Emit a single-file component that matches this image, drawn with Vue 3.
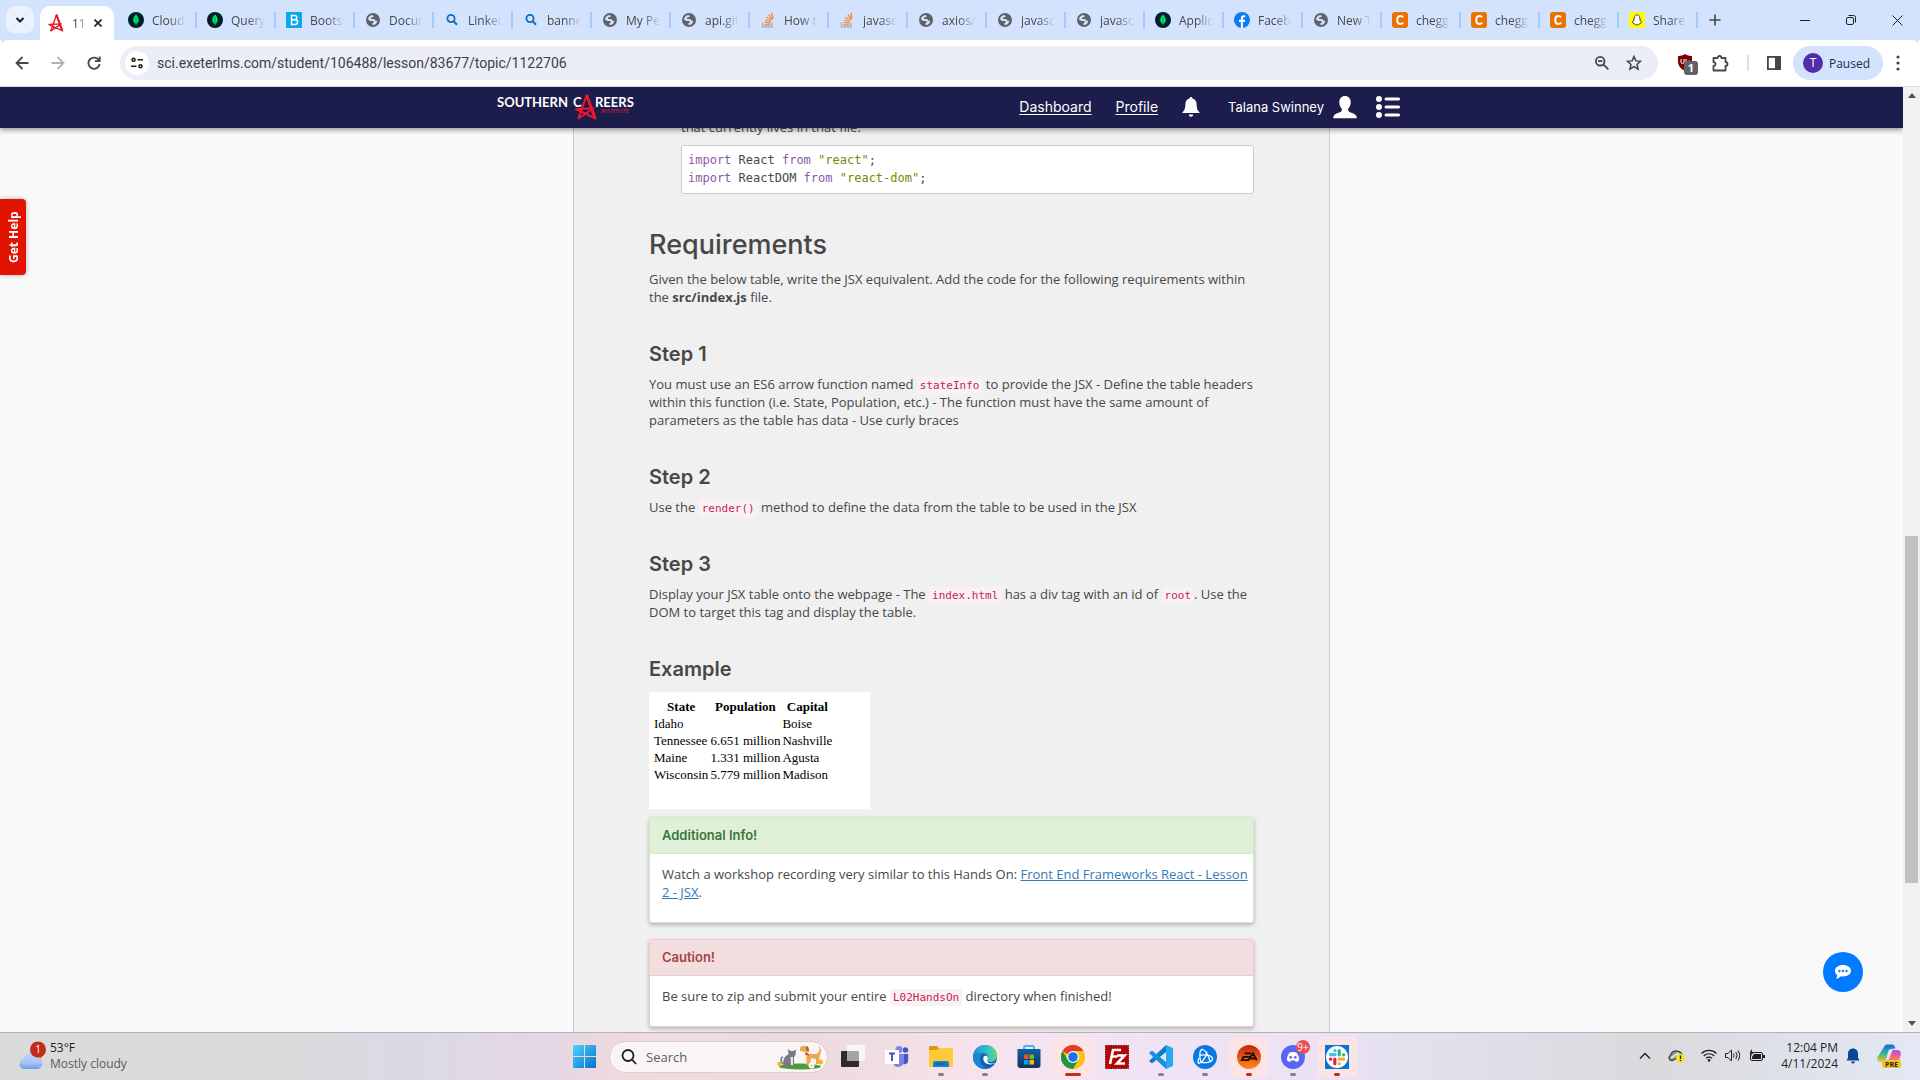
<script setup>
import { ref } from "vue";

const url = ref("sci.exeterlms.com/student/106488/lesson/83677/topic/1122706");
const search = ref("");

const tabs = [
  { icon: "mongo", title: "Cloud: Mongo" },
  { icon: "mongo", title: "Query Docs" },
  { icon: "bootswatch", title: "Bootswatch" },
  { icon: "globe", title: "Document" },
  { icon: "lens", title: "LinkedIn" },
  { icon: "lens", title: "banner" },
  { icon: "globe", title: "My Personal" },
  { icon: "globe", title: "api.github" },
  { icon: "stack", title: "How to" },
  { icon: "stack", title: "javascript" },
  { icon: "globe", title: "axios/axios" },
  { icon: "globe", title: "javascript" },
  { icon: "globe", title: "javascript" },
  { icon: "mongo", title: "Application" },
  { icon: "facebook", title: "Facebook" },
  { icon: "globe", title: "New Tab" },
  { icon: "chegg", title: "chegg.com" },
  { icon: "chegg", title: "chegg.com" },
  { icon: "chegg", title: "chegg.com" },
  { icon: "snap", title: "Share" },
];

const apps = [
  { icon: "taskview", label: "Task view" },
  { icon: "teams", label: "Teams" },
  { icon: "folder", label: "File Explorer", open: true },
  { icon: "edge", label: "Edge", open: true },
  { icon: "store", label: "Store" },
  { icon: "chrome", label: "Chrome", open: true, alert: true, current: true },
  { icon: "filezilla", label: "FileZilla" },
  { icon: "vscode", label: "Visual Studio Code", open: true },
  { icon: "battlenet", label: "Battle.net", open: true },
  { icon: "ea", label: "EA", open: true, alert: true },
  { icon: "discord", label: "Discord", open: true, badge: "9+" },
  { icon: "slack", label: "Slack", open: true, alert: true },
];

const states = [
  { name: "Idaho", population: "", capital: "Boise" },
  { name: "Tennessee", population: "6.651 million", capital: "Nashville" },
  { name: "Maine", population: "1.331 million", capital: "Agusta" },
  { name: "Wisconsin", population: "5.779 million", capital: "Madison" },
];
</script>

<template>
  <svg class="sprite" aria-hidden="true">
    <defs>
      <linearGradient id="winBlue" x1="0" y1="0" x2="1" y2="1">
        <stop offset="0" stop-color="#4fd5fb" />
        <stop offset="1" stop-color="#0470cf" />
      </linearGradient>
      <linearGradient id="edgeTop" x1="0" y1="0" x2="1" y2="0">
        <stop offset="0" stop-color="#1b8fd6" />
        <stop offset="0.6" stop-color="#35c1c8" />
        <stop offset="1" stop-color="#62d96b" />
      </linearGradient>
      <linearGradient id="eaFire" x1="0" y1="0" x2="0" y2="1">
        <stop offset="0" stop-color="#c62410" />
        <stop offset="1" stop-color="#ff8a1c" />
      </linearGradient>
      <linearGradient id="cloudFill" x1="0" y1="0" x2="0" y2="1">
        <stop offset="0" stop-color="#b9d6fb" />
        <stop offset="0.6" stop-color="#a9c4f5" />
        <stop offset="1" stop-color="#6f9bea" />
      </linearGradient>
      <linearGradient id="copilotLeft" x1="0" y1="0" x2="0" y2="1">
        <stop offset="0" stop-color="#1d63e0" />
        <stop offset="0.5" stop-color="#2fb6a0" />
        <stop offset="1" stop-color="#f5c51e" />
      </linearGradient>
      <linearGradient id="copilotRight" x1="0" y1="0" x2="0" y2="1">
        <stop offset="0" stop-color="#a157e8" />
        <stop offset="0.5" stop-color="#ef5aa0" />
        <stop offset="1" stop-color="#ff8a3c" />
      </linearGradient>
      <linearGradient id="storeFill" x1="0" y1="0" x2="0" y2="1">
        <stop offset="0" stop-color="#0f5fa8" />
        <stop offset="1" stop-color="#15315c" />
      </linearGradient>
    </defs>
    <symbol id="mongo" viewBox="0 0 16 16">
      <circle cx="8" cy="8" r="8" fill="#001e2b" />
      <path d="M8 2.500c1.600 1.700 2.700 3.400 2.700 5.400S9.400 11.300 8.300 12v1.500h-.6V12C6.600 11.300 5.300 9.900 5.300 7.900S6.400 4.200 8 2.500z" fill="#00ed64" />
      <path d="M8 5v8" stroke="#00684a" stroke-width="0.6" />
    </symbol>
    <symbol id="bootswatch" viewBox="0 0 16 16">
      <rect width="16" height="16" rx="1" fill="#0aa9e8" />
      <path d="M5.500 3.500h3.200a2 2 0 0 1 0 4.200H5.500zM5.500 7.700h3.700a2.400 2.400 0 0 1 0 4.800H5.500z" fill="none" stroke="#fff" stroke-width="1.400" />
    </symbol>
    <symbol id="globe" viewBox="0 0 16 16">
      <circle cx="8" cy="8" r="7" fill="#5f6368" />
      <path d="M3 7.500C3 5 5 3 7.500 2.900L9 4.200 7.600 5.300 6 5.600v1.500h3.200l1.400 1.600h1.600C12 11 10.500 12.900 8 13l-1-1.200 2-1.500-.8-1.400H5.500z" fill="#d3e3fd" />
    </symbol>
    <symbol id="lens" viewBox="0 0 16 16">
      <circle cx="7" cy="6.500" r="3.600" fill="none" stroke="#0f6cbd" stroke-width="1.800" />
      <path d="M9.700 9.200l3.300 3.500" stroke="#0f6cbd" stroke-width="2" />
    </symbol>
    <symbol id="stack" viewBox="0 0 16 16">
      <path d="M2.500 10.500v4.300h9.600v-4.300" fill="none" stroke="#a9adb2" stroke-width="1.300" />
      <path d="M4.300 12.800h6M4.400 10.500l5.900.6M5 8l5.700 1.700M6.400 5.300l5.100 3M8.800 2.600l3.600 4.700M11.800 1l1.200 5.500" stroke="#f48024" stroke-width="1.200" />
    </symbol>
    <symbol id="facebook" viewBox="0 0 16 16">
      <circle cx="8" cy="8" r="8" fill="#0a7cf5" />
      <path d="M6.900 16V9.900H5V7.700h1.900V6.300c0-2 1-3 2.900-3h1.500v2H10c-.8 0-1.100.4-1.100 1.100v1.300h2.300l-.4 2.200H8.900V16z" fill="#fff" />
    </symbol>
    <symbol id="chegg" viewBox="0 0 16 16">
      <rect width="16" height="16" rx="3" fill="#eb7100" />
      <path d="M11 5.300C10.400 4.300 9.500 4 8.600 4 6.500 4 5.200 5.600 5.200 8s1.300 4 3.400 4c1 0 1.900-.4 2.500-1.400" fill="none" stroke="#fff" stroke-width="2" />
    </symbol>
    <symbol id="snap" viewBox="0 0 16 16">
      <rect width="16" height="16" rx="3" fill="#fffc00" />
      <path d="M8 2.800c1.700 0 2.700 1.200 2.700 2.800v1.300l1 .1-.8.900c.3 1.100 1 1.900 2 2.200-.2.600-1 .7-1.300.9l-.3.800c-1.300-.1-1.800 1.200-3.300 1.200s-2-1.300-3.300-1.200l-.3-.8c-.3-.2-1.100-.3-1.300-.9 1-.3 1.700-1.100 2-2.200l-.8-.9 1-.1V5.600C5.300 4 6.300 2.800 8 2.800z" fill="#fff" stroke="#222" stroke-width="0.800" />
    </symbol>
    <symbol id="star" viewBox="0 0 22 26">
      <path d="M3.200 24.800L11.600 1.500 20.600 24.500 1 15.200 18.500 14.200 3.200 24.800" fill="none" stroke="#e8192c" stroke-width="2" stroke-linejoin="round" />
      <path d="M11.600 1l8 22" stroke="#e8192c" stroke-width="3" />
    </symbol>

    <symbol id="taskview" viewBox="0 0 24 24">
      <rect x="6" y="0" width="18" height="16" rx="1" fill="#f6f6f6" />
      <rect x="0" y="6" width="18" height="16" rx="1" fill="#2c2c2c" />
      <path d="M6 6h12v10H6z" fill="#a3a3a3" />
    </symbol>
    <symbol id="teams" viewBox="0 0 24 24">
      <circle cx="20.500" cy="5" r="2.700" fill="#4b53bc" />
      <circle cx="14" cy="4.500" r="3.500" fill="#7b83eb" />
      <path d="M17 9h6.200v7a3.500 3.500 0 0 1-6.200 2z" fill="#4b53bc" />
      <path d="M9 9h10v7.500a6 6 0 0 1-10 4z" fill="#7b83eb" />
      <rect y="5" width="14" height="14" fill="#fff" />
      <path d="M4 8.500h6M7 8.500v7.500" stroke="#4b53bc" stroke-width="2" />
    </symbol>
    <symbol id="folder" viewBox="0 0 24 24">
      <path d="M0 2a1 1 0 0 1 1-1h7l3 3v4H0z" fill="#d99a0b" />
      <path d="M0 5h8l2-2h13a1 1 0 0 1 1 1v18H0z" fill="#ffc937" />
      <path d="M4 22v-4a2 2 0 0 1 2-2h12a2 2 0 0 1 2 2v4z" fill="#1280d0" />
      <path d="M8 19h8" stroke="#0a5a9c" stroke-width="1.500" />
    </symbol>
    <symbol id="edge" viewBox="0 0 24 24">
      <circle cx="12" cy="12" r="12" fill="#0f5fb8" />
      <path d="M0 11C1 4.500 6 0 12 0c7 0 12 5 12 10.500 0 4-3 6.500-6.500 6.500-2.500 0-4-1-3-2.500C16 12 14 8 9.500 8 5 8 1.500 9 0 11z" fill="url(#edgeTop)" />
      <path d="M9 10c-3 2.500-2.500 9 3.500 12.500-6 1.500-12-3-12.500-9.500C1 8.500 6 7 9.500 8z" fill="#1b86d8" />
      <path d="M11 11c-2 3 0 8 6 8.500 2.500 0 4.500-.8 5.200-1.500-.7.200-2 .6-4 .4-3 0-4.500-2.400-3.700-4 1-1.800 0-4.500-3.500-3.400z" fill="#fff" />
    </symbol>
    <symbol id="store" viewBox="0 0 24 24">
      <path d="M7 5V2.500A1.500 1.500 0 0 1 8.500 1h7A1.500 1.500 0 0 1 17 2.500V5" fill="none" stroke="#38c0f2" stroke-width="2" />
      <path d="M0.500 4h23v16a3 3 0 0 1-3 3h-17a3 3 0 0 1-3-3z" fill="url(#storeFill)" />
      <path d="M7 9.500h4.500V14H7z" fill="#f25022" />
      <path d="M12.500 9.500H17V14h-4.500z" fill="#7fba00" />
      <path d="M7 15h4.500v4.500H7z" fill="#00a4ef" />
      <path d="M12.500 15H17v4.500h-4.500z" fill="#ffb900" />
    </symbol>
    <symbol id="chrome" viewBox="0 0 24 24">
      <circle cx="12" cy="12" r="12" fill="#fbc116" />
      <path d="M12 12L1.600 6A12 12 0 0 1 22.400 6H12z" fill="#e33b2e" />
      <path d="M1.600 6A12 12 0 0 0 12 24l5.200-9L12 12 6.800 15z" fill="#229342" />
      <circle cx="12" cy="12" r="6" fill="#fff" />
      <circle cx="12" cy="12" r="4.800" fill="#1a73e8" />
    </symbol>
    <symbol id="filezilla" viewBox="0 0 24 24">
      <rect x="0.500" y="0.500" width="23" height="23" fill="#b00606" stroke="#7c0000" stroke-dasharray="1.500 1" />
      <path d="M5 19l3-14h8M6.500 11.500h6M12 10.500h7.500L12 18.500h8" fill="none" stroke="#fff" stroke-width="2.600" />
    </symbol>
    <symbol id="vscode" viewBox="0 0 24 24">
      <path d="M17 0l7 3v18l-7 3z" fill="#24a9f2" />
      <path d="M17 0v7L3 18.500 0 16z" fill="#0d7fc9" />
      <path d="M17 24v-7L3 5.500 0 8z" fill="#1592df" />
    </symbol>
    <symbol id="battlenet" viewBox="0 0 24 24">
      <circle cx="12" cy="12" r="12" fill="#0a78e6" />
      <g fill="none" stroke="#fff" stroke-width="1.300">
        <path d="M8 17.500C6 12 6.500 4 9.500 4.500c3.500 1 6.500 7 7.500 12" />
        <path d="M6.500 10.500c4-1.500 13-.5 13 3.500 0 3-6 4-11 3.500" />
        <path d="M13.500 6.500c1 3-3.500 10.500-7.500 12C4.500 18 5 15 6.200 13" />
      </g>
    </symbol>
    <symbol id="ea" viewBox="0 0 24 24">
      <circle cx="12" cy="12" r="12" fill="url(#eaFire)" />
      <path d="M7.500 8.300H14M6 11.800h6.500M6.800 11.500L4.800 15.200h6.500L16 8.300l3.800 7M13.500 13.500h5" fill="none" stroke="#1a0d08" stroke-width="1.800" />
    </symbol>
    <symbol id="discord" viewBox="0 0 24 24">
      <circle cx="12" cy="12" r="12" fill="#5865f2" />
      <path d="M8.500 7.500c2-.7 5-.7 7 0 1.800 2.500 2.700 5 2.500 8-1 .9-2 1.300-3 1.500l-1-1.500h-4L9 17c-1-.2-2-.6-3-1.500-.2-3 .7-5.500 2.500-8z" fill="#fff" />
      <circle cx="9.700" cy="12.300" r="1.400" fill="#5865f2" />
      <circle cx="14.300" cy="12.300" r="1.400" fill="#5865f2" />
    </symbol>
    <symbol id="slack" viewBox="0 0 24 24">
      <rect width="24" height="24" fill="#0a73d1" />
      <circle cx="12" cy="12" r="11" fill="#fff" />
      <g fill="none" stroke-width="3.200" stroke-linecap="round">
        <path d="M10 5.500v.2M5.500 9.700H10" stroke="#36c5f0" />
        <path d="M14.200 5.500v4.300M18.500 9.800h.2" stroke="#2eb67d" />
        <path d="M14.200 14.200h4.500M14.200 18.500v.2" stroke="#ecb22e" />
        <path d="M9.800 14.200v4.500M5.500 14.200h.2" stroke="#e01e5a" />
      </g>
    </symbol>
  </svg>

  <div class="window">
    <header class="tabstrip">
      <button class="tab-search" aria-label="Search tabs">
        <svg width="10" height="10" viewBox="0 0 10 10"><path d="M1.500 3l3.500 3.500L8.500 3" fill="none" stroke="#1f1f1f" stroke-width="2" /></svg>
      </button>
      <div class="tab active">
        <svg width="16" height="18"><use href="#star" /></svg>
        <span class="tab-title">11</span>
        <button aria-label="Close tab">
          <svg width="8" height="8" viewBox="0 0 8 8"><path d="M0.500 0.500l7 7M7.500 0.500l-7 7" stroke="#1f1f1f" stroke-width="1.600" /></svg>
        </button>
      </div>
      <div v-for="(tab, i) in tabs" :key="i" class="tab">
        <svg width="16" height="16"><use :href="'#' + tab.icon" /></svg>
        <span class="tab-title">{{ tab.title }}</span>
      </div>
      <button class="new-tab" aria-label="New tab">
        <svg width="12" height="12" viewBox="0 0 12 12"><path d="M6 0.500v11M0.500 6h11" stroke="#444746" stroke-width="1.600" /></svg>
      </button>
      <div class="window-buttons">
        <button aria-label="Minimize">
          <svg width="10" height="10" viewBox="0 0 10 10"><path d="M0 5.500h10" stroke="#1f1f1f" /></svg>
        </button>
        <button aria-label="Restore">
          <svg width="10" height="10" viewBox="0 0 10 10" fill="none" stroke="#1f1f1f"><rect x="0.500" y="2.500" width="7" height="7" rx="1.500" /><path d="M2.500 0.500h5a2 2 0 0 1 2 2v5" /></svg>
        </button>
        <button aria-label="Close">
          <svg width="11" height="11" viewBox="0 0 11 11"><path d="M0.500 0.500l10 10M10.500 0.500l-10 10" stroke="#1f1f1f" /></svg>
        </button>
      </div>
    </header>

    <div class="toolbar">
      <button class="tool" aria-label="Back">
        <svg width="14" height="14" viewBox="0 0 14 14"><path d="M7.500 1L1.500 7l6 6M1.500 7H13.500" fill="none" stroke="#444746" stroke-width="1.800" /></svg>
      </button>
      <button class="tool" aria-label="Forward">
        <svg width="14" height="14" viewBox="0 0 14 14"><path d="M6.500 1l6 6-6 6M12.500 7H0.500" fill="none" stroke="#b0b2b3" stroke-width="1.800" /></svg>
      </button>
      <button class="tool" aria-label="Reload">
        <svg width="14" height="14" viewBox="0 0 14 14"><path d="M12 4.500A5.600 5.600 0 1 0 12.600 8M12.700 0.500v4.700H8" fill="none" stroke="#444746" stroke-width="1.800" /></svg>
      </button>
      <div class="omnibox">
        <span class="site-info">
          <svg width="12" height="12" viewBox="0 0 12 12" fill="none" stroke="#1f1f1f" stroke-width="1.600"><circle cx="2.500" cy="2.800" r="1.500" /><path d="M6.500 2.800H12M0 9.200h5.500" /><circle cx="9.500" cy="9.200" r="1.500" /></svg>
        </span>
        <input v-model="url" class="url" type="text" aria-label="Address" spellcheck="false" />
        <svg width="16" height="16" viewBox="0 0 16 16" fill="none" stroke="#444746" stroke-width="1.800"><circle cx="6.200" cy="6.200" r="4.300" /><path d="M9.300 9.300l5 5M4 6.200h4.400" /></svg>
        <svg width="16" height="16" viewBox="0 0 16 16"><path d="M8 1.500l1.900 4.400 4.700.4-3.600 3.100 1.100 4.700L8 11.600l-4.100 2.500L5 9.400 1.400 6.300l4.700-.4z" fill="none" stroke="#444746" stroke-width="1.500" /></svg>
      </div>
      <div class="extensions">
        <span class="ublock">
          <svg width="16" height="18" viewBox="0 0 16 18"><path d="M8 0c2 1.500 5 2 7 2v5c0 5-3 8-7 10-4-2-7-5-7-10V2c2 0 5-.5 7-2z" fill="#800000" /><path d="M4 5v3a1.500 1.500 0 0 0 3 0V5M9 9V5M9 7.500a2 2 0 1 0 3-1" fill="none" stroke="#fff" /></svg>
          <b>1</b>
        </span>
        <svg width="18" height="18" viewBox="0 0 18 18"><path d="M2.500 4h4a2 2 0 0 1 4 0h4v4a2 2 0 0 1 0 4v4.500h-12v-4.500a2 2 0 0 0 0-4z" fill="none" stroke="#444746" stroke-width="1.800" stroke-linejoin="round" /></svg>
        <i class="divider"></i>
        <svg width="14" height="14" viewBox="0 0 14 14"><rect x="0.900" y="0.900" width="12.200" height="12.200" fill="none" stroke="#444746" stroke-width="1.800" /><path d="M8 1h5.500v12H8z" fill="#444746" /></svg>
      </div>
      <button class="account"><span class="avatar">T</span>Paused</button>
      <button class="kebab" aria-label="Menu">
        <svg width="4" height="16" viewBox="0 0 4 16" fill="#444746"><circle cx="2" cy="2" r="1.600" /><circle cx="2" cy="8" r="1.600" /><circle cx="2" cy="14" r="1.600" /></svg>
      </button>
    </div>

    <div class="viewport">
      <div class="page">
        <nav class="site-nav">
          <a href="#" class="logo" aria-label="Southern Careers Institute">
            <svg width="138" height="28" viewBox="0 0 138 28">
              <text x="0" y="14" class="logo-text">SOUTHERN</text>
              <text x="76" y="14" class="logo-text">C</text>
              <text x="98" y="14" class="logo-text">REERS</text>
              <text x="104" y="20" class="logo-sub">INSTITUTE</text>
              <use href="#star" x="78" y="1" width="22" height="26" />
            </svg>
          </a>
          <div class="nav-links">
            <a href="#">Dashboard</a>
            <a href="#">Profile</a>
            <svg width="18" height="20" viewBox="0 0 18 20" fill="#fff"><path d="M9 0c.9 0 1.500.6 1.500 1.500 2.700.8 4 2.700 4.100 5.500.1 4.500.8 6.300 3.400 9H0c2.600-2.700 3.300-4.500 3.400-9C3.500 4.200 4.800 2.300 7.500 1.500 7.500.6 8.100 0 9 0z" /><path d="M6.800 17.500h4.400a2.200 2.200 0 0 1-4.400 0z" /></svg>
            <span class="user">
              Talana Swinney
              <svg width="24" height="24" viewBox="0 0 24 24"><path d="M12 1c3.600 0 5.700 2.600 5.700 6.200 0 3-1 5-2.500 6.300v2.300c1.500 1.900 5.800 2.200 7.800 4.700.6.800.8 1.700.8 2.800H.2c0-1.100.2-2 .8-2.800 2-2.500 6.300-2.800 7.800-4.700v-2.300C7.300 12.200 6.300 10.200 6.300 7.200 6.300 3.600 8.400 1 12 1z" fill="#fff" /></svg>
            </span>
            <svg width="24" height="22" viewBox="0 0 24 22"><g fill="#fff"><circle cx="3" cy="3" r="3" /><circle cx="3" cy="11" r="3" /><circle cx="3" cy="19" r="3" /></g><path d="M10 3h12.500M10 11h12.500M10 19h12.500" stroke="#fff" stroke-width="3" stroke-linecap="round" /></svg>
          </div>
        </nav>

        <main class="lesson">
          <div class="list-item">
            <p>that currently lives in that file.</p>
            <pre><span class="kw">import</span> React <span class="kw">from</span> <span class="str">"react"</span>;
<span class="kw">import</span> ReactDOM <span class="kw">from</span> <span class="str">"react-dom"</span>;</pre>
          </div>
          <hr />
          <h2>Requirements</h2>
          <p>
            Given the below table, write the JSX equivalent. Add the code for the following
            requirements within the <strong>src/index.js</strong> file.
          </p>
          <hr />
          <h3>Step 1</h3>
          <p>
            You must use an ES6 arrow function named <code>stateInfo</code> to provide the JSX -
            Define the table headers within this function (i.e. State, Population, etc.) - The
            function must have the same amount of parameters as the table has data - Use curly
            braces
          </p>
          <hr />
          <h3>Step 2</h3>
          <p>
            Use the <code>render()</code> method to define the data from the table to be used in
            the JSX
          </p>
          <hr />
          <h3>Step 3</h3>
          <p>
            Display your JSX table onto the webpage - The <code>index.html</code> has a div tag
            with an id of <code>root</code>. Use the DOM to target this tag and display the table.
          </p>
          <hr />
          <h3>Example</h3>
          <div class="example">
            <table>
              <thead>
                <tr>
                  <th>State</th>
                  <th>Population</th>
                  <th>Capital</th>
                </tr>
              </thead>
              <tbody>
                <tr v-for="state in states" :key="state.name">
                  <td>{{ state.name }}</td>
                  <td>{{ state.population }}</td>
                  <td>{{ state.capital }}</td>
                </tr>
              </tbody>
            </table>
          </div>
          <section class="panel success">
            <h4>Additional Info!</h4>
            <p>
              Watch a workshop recording very similar to this Hands On:
              <a href="#">Front End Frameworks React - Lesson 2 - JSX</a>.
            </p>
          </section>
          <section class="panel danger">
            <h4>Caution!</h4>
            <p>
              Be sure to zip and submit your entire <code>L02HandsOn</code> directory when
              finished!
            </p>
          </section>
        </main>

        <button class="get-help">Get Help</button>
        <button class="chat" aria-label="Chat">
          <svg width="18" height="16" viewBox="0 0 18 16"><path d="M9 1c4.600 0 8 2.500 8 5.700S13.600 12.400 9 12.400c-.8 0-1.600-.1-2.300-.2C5.500 13.500 4 14.500 2 14.600c.8-.9 1.300-2 1.400-3.300C1.900 10.300 1 8.600 1 6.700 1 3.500 4.400 1 9 1z" fill="#fff" /><g fill="#007bff"><circle cx="5.500" cy="7" r="1.200" /><circle cx="9" cy="7" r="1.200" /><circle cx="12.500" cy="7" r="1.200" /></g></svg>
        </button>
      </div>
      <div class="scrollbar">
        <svg width="8" height="5" viewBox="0 0 8 5"><path d="M0 5l4-5 4 5z" fill="#505050" /></svg>
        <div class="track"><div class="thumb"></div></div>
        <svg width="8" height="5" viewBox="0 0 8 5"><path d="M0 0l4 5 4-5z" fill="#505050" /></svg>
      </div>
    </div>

    <footer class="taskbar">
      <div class="weather">
        <svg width="28" height="30" viewBox="0 0 28 30">
          <circle cx="19" cy="15" r="5" fill="#f58a1f" />
          <path d="M6 28a5 5 0 0 1-.5-9.900A7 7 0 0 1 18.500 16 6 6 0 0 1 19 28z" fill="url(#cloudFill)" />
          <circle cx="20" cy="8.500" r="8" fill="#c42b1c" />
          <text x="20" y="12" class="alert-count">1</text>
        </svg>
        <div class="weather-text">
          <span>53°F</span>
          <span class="muted">Mostly cloudy</span>
        </div>
      </div>
      <div class="dock">
        <button class="app" aria-label="Start">
          <svg width="23" height="23" viewBox="0 0 23 23" fill="url(#winBlue)"><path d="M0 1a1 1 0 0 1 1-1h10v11H0zM12 0h10a1 1 0 0 1 1 1v10H12zM0 12h11v11H1a1 1 0 0 1-1-1zM12 12h11v10a1 1 0 0 1-1 1H12z" /></svg>
        </button>
        <label class="search">
          <svg width="16" height="16" viewBox="0 0 16 16" fill="none" stroke="#1f1f1f" stroke-width="1.800"><circle cx="7" cy="6.500" r="5.500" /><path d="M11 10.500l4 4.500" /></svg>
          <input v-model="search" type="text" placeholder="Search" aria-label="Search" />
          <svg width="46" height="26" viewBox="0 0 46 26">
            <ellipse cx="23" cy="22.500" rx="21" ry="3" fill="#4c9a3a" />
            <path d="M6.500 21c-1-5 1-9 5-10.500L11 5l2.500 2h3L19 5.500 18.500 11 17 13v9H7z" fill="#7a7787" />
            <path d="M6.500 20c-3-1-3.500-6-.5-7" fill="none" stroke="#7a7787" stroke-width="1.500" />
            <path d="M13.500 13H16v8h-2z" fill="#e8e6ee" />
            <path d="M23 4c0-2 5-3 7-1l1 7h8c3-1 4-4 3-8 2.500 2 2.500 7 .5 10L42 20h-3v-5l-5-1-1 7h-3.500V12L28 8l-5-1z" fill="#e9a852" />
            <path d="M29 2c3 0 3.500 4 2.500 6L29 6z" fill="#a8682a" />
            <path d="M28 9l4 1v1.500l-4-1z" fill="#d33a2c" />
            <circle cx="34.500" cy="21.500" r="3" fill="#fff" /><circle cx="34.500" cy="21.500" r="1" fill="#f1b51c" />
            <circle cx="2.500" cy="20" r="2.200" fill="#f4b81c" /><circle cx="43.500" cy="18" r="2.500" fill="#f4b81c" />
          </svg>
        </label>
        <button v-for="app in apps" :key="app.icon" class="app" :class="{ alert: app.alert, open: app.open, current: app.current }" :aria-label="app.label">
          <svg width="24" height="24"><use :href="'#' + app.icon" /></svg>
          <span v-if="app.badge" class="badge">{{ app.badge }}</span>
        </button>
      </div>
      <div class="tray">
        <svg width="12" height="8" viewBox="0 0 12 8"><path d="M1 6.500l5-5 5 5" fill="none" stroke="#1f1f1f" stroke-width="1.400" /></svg>
        <svg class="onedrive" width="18" height="14" viewBox="0 0 18 14"><path d="M4 11.500C1 11.500 0 8 2.500 6.500 3 3 7 1 10 2.500c2 0 4 2 4.500 4z" fill="#9a9a9a" stroke="#3f3f3f" stroke-width="1.300" /><path d="M3 9l8-5" stroke="#e6e6e6" stroke-width="1.500" /><circle cx="12.500" cy="9.300" r="4.500" fill="#fbe122" /><path d="M12.500 6.500v3.500M12.500 11v1.200" stroke="#222" stroke-width="1.300" /></svg>
        <svg width="16" height="13" viewBox="0 0 16 13" fill="none" stroke="#1f1f1f" stroke-width="1.200"><path d="M0.500 4.500a10.500 10.500 0 0 1 15 0M2.700 7a7.400 7.400 0 0 1 10.600 0M5 9.300a4.200 4.200 0 0 1 6 0" /><circle cx="8" cy="11.300" r="0.800" fill="#1f1f1f" /></svg>
        <svg width="16" height="13" viewBox="0 0 16 13" fill="none" stroke="#1f1f1f"><path d="M0.500 4.500h2.500L6.500 1v11L3 8.500H0.500zM8.500 4.500q1.200 2 0 4M10.800 3q2.400 3.500 0 7M13 1.500q3.400 5 0 10" /></svg>
        <svg width="16" height="13" viewBox="0 0 16 13"><rect x="1.500" y="3.500" width="12" height="8" rx="1.500" fill="none" stroke="#1f1f1f" /><path d="M5 5h7v5H3V8zM14 6h2v3h-2z" fill="#1f1f1f" /><path d="M3 0L0.500 4h2L1.500 7.500 5 3H3z" fill="#1f1f1f" /></svg>
        <div class="clock">
          <span>12:04 PM</span>
          <span>4/11/2024</span>
        </div>
        <svg width="14" height="16" viewBox="0 0 14 16" fill="#0a4694"><path d="M7 0.500c3.200 0 5 2.300 5 5.200v4l1.500 2.800H.5L2 9.700v-4C2 2.800 3.800.5 7 .5zM5 13.500h4a2 2 0 0 1-4 0z" /></svg>
        <svg class="copilot" width="24" height="24" viewBox="0 0 24 24">
          <path d="M7 3c1-2 2-2.500 4-2.500h4c2 0 3 2 3.500 4l-4 .5c-2 0-3 1-3.500 3l-2 8c-.5 1-1.500 2-3 2H4c-3 0-4.500-2-3.500-5z" fill="url(#copilotLeft)" />
          <path d="M15.500 6H20c3 0 4.500 2 3.700 5L22 17H9c2 0 3-1.500 3.500-3z" fill="url(#copilotRight)" />
          <rect x="5" y="16" width="19" height="8" rx="2" fill="#f8c31c" />
          <text x="14.500" y="23" class="pre">PRE</text>
        </svg>
      </div>
    </footer>
  </div>
</template>

<style>
body {
  margin: 0;
  overflow: hidden;
}
</style>

<style scoped>
* {
  box-sizing: border-box;
}
button {
  border: 0;
  padding: 0;
  background: none;
  font: inherit;
  color: inherit;
  display: flex;
  align-items: center;
  justify-content: center;
}
input {
  border: 0;
  padding: 0;
  background: none;
  outline: 0;
  font: inherit;
  min-width: 0;
}
svg {
  flex-shrink: 0;
}
.sprite {
  position: absolute;
  width: 0;
  height: 0;
}
.window {
  display: flex;
  flex-direction: column;
  height: 100vh;
  font-family: "Open Sans", "Noto Sans", sans-serif;
  font-size: 12px;
  color: #1f1f1f;
}

/* browser */
.tabstrip {
  display: flex;
  align-items: center;
  height: 40px;
  padding-left: 6px;
  background: #d3e3fd;
}
.tab-search {
  width: 28px;
  height: 28px;
  margin-right: 6px;
  border-radius: 10px;
  background: #ebf2fe;
}
.tab {
  display: flex;
  align-items: center;
  gap: 8px;
  width: 79px;
  height: 16px;
  padding: 0 9px 0 10px;
  border-right: 2px solid #a8c7fa;
  color: #474747;
}
.tab-title {
  flex: 1;
  overflow: hidden;
  white-space: nowrap;
  mask-image: linear-gradient(to right, #000 50%, transparent);
}
.tab.active {
  z-index: 1;
  align-self: flex-end;
  width: 74px;
  height: 34px;
  margin-right: 4px;
  padding: 0 12px 0 8px;
  border: 0;
  border-radius: 10px 10px 0 0;
  background: #fff;
}
.new-tab {
  width: 34px;
}
.window-buttons {
  display: flex;
  margin-left: auto;
}
.window-buttons button {
  width: 46px;
  height: 40px;
}
.toolbar {
  display: flex;
  align-items: center;
  height: 47px;
  padding: 0 7px 0 4px;
  border-bottom: 1px solid #dcdcdc;
  border-radius: 8px 8px 0 0;
  background: #fff;
  box-shadow: 0 -8px 0 -1px #d3e3fd;
}
.tool {
  width: 36px;
  height: 34px;
}
.omnibox {
  display: flex;
  flex: 1;
  align-items: center;
  gap: 16px;
  height: 34px;
  margin-left: 8px;
  padding: 0 16px 0 5px;
  border-radius: 17px;
  background: #ebeef7;
}
.site-info {
  display: flex;
  align-items: center;
  justify-content: center;
  width: 24px;
  height: 24px;
  margin-right: -8px;
  border-radius: 50%;
  background: #fff;
}
.url {
  flex: 1;
  font-family: Roboto, sans-serif;
  font-size: 14px;
  color: #3c4043;
}
.extensions {
  display: flex;
  align-items: center;
  gap: 18px;
  padding: 0 12px 0 19px;
}
.ublock {
  position: relative;
  display: flex;
}
.ublock b {
  position: absolute;
  left: 7px;
  top: 7px;
  width: 14px;
  border-radius: 3px;
  background: #5f6368;
  color: #fff;
  font-size: 11px;
  line-height: 14px;
  text-align: center;
}
.divider {
  width: 2px;
  height: 16px;
  background: #d3e3fd;
}
.account {
  gap: 6px;
  height: 34px;
  padding: 0 13px 0 10px;
  border-radius: 17px;
  background: #d3e3fd;
  color: #1d2b50;
}
.avatar {
  width: 20px;
  border-radius: 50%;
  background: #512da8;
  color: #fff;
  line-height: 20px;
}
.kebab {
  width: 30px;
}

/* page */
.viewport {
  display: flex;
  flex: 1;
  min-height: 0;
}
.page {
  position: relative;
  flex: 1;
  overflow: hidden;
  background: #f9f9f9;
}
.site-nav {
  position: relative;
  z-index: 1;
  display: flex;
  align-items: center;
  justify-content: space-between;
  height: 41px;
  padding: 0 503px 2px 497px;
  background: #1c1d4c;
  box-shadow: 0 2px 5px rgba(0, 0, 0, 0.4);
  color: #fff;
  font: 13px/18px Inter, sans-serif;
}
.logo {
  display: flex;
}
.logo-text {
  fill: #fff;
  font: 700 13px Lato, sans-serif;
}
.logo-sub {
  fill: #e8192c;
  font: italic 6px Lato, sans-serif;
}
.nav-links {
  display: flex;
  align-items: center;
  gap: 24px;
}
.nav-links a {
  color: #fff;
  font-size: 14px;
  text-underline-offset: 2px;
}
.user {
  display: flex;
  align-items: center;
  gap: 9px;
  margin: 0 -5px 0 4px;
}
.lesson {
  width: 757px;
  max-width: 100%;
  min-height: 100%;
  margin: -20px auto 0;
  padding: 9px 75px 0;
  border: 1px solid #ccc;
  background: #f0f0f0;
  color: #474747;
  font-size: 13px;
  line-height: 18px;
}
.lesson p {
  margin: 0 0 16px;
}
.lesson .list-item {
  padding-left: 32px;
}
.lesson .list-item p {
  margin-bottom: 9px;
}
pre {
  margin: 0 0 16px;
  padding: 5px 6px 6px;
  border: 1px solid #ccc;
  border-radius: 3px;
  background: #fff;
  font: 12px/18px "DejaVu Sans Mono", monospace;
}
.kw {
  color: #8959a8;
}
.str {
  color: #718c00;
}
hr {
  height: 1px;
  margin: 0 0 18px;
  border: 0;
  background: #eee;
}
h2,
h3 {
  margin: 0 0 9px;
  font: 500 27px/32px Inter, sans-serif;
}
h3 {
  margin-bottom: 8px;
  font-size: 20px;
  font-weight: 600;
  line-height: 26px;
}
code {
  padding: 2px 3px;
  border-radius: 3px;
  background: #f9f2f4;
  color: #c7254e;
  font: 11px/14px "DejaVu Sans Mono", monospace;
}
.example {
  width: 221px;
  height: 117px;
  margin: 10px 0 8px;
  padding: 6px 3px;
  background: #fff;
}
table {
  border-spacing: 2px 0;
  color: #000;
  font: 13px/17px "Liberation Serif", serif;
}
th,
td {
  height: 17px;
  padding: 0;
}
td {
  white-space: nowrap;
}
.panel {
  margin-bottom: 16px;
  border: 1px solid #d6e9c6;
  border-radius: 3px;
  background: #fff;
  box-shadow: 0 2px 4px rgba(0, 0, 0, 0.25);
}
.panel h4 {
  margin: 0;
  padding: 8px 12px 9px;
  border-bottom: 1px solid #d6e9c6;
  background: #dff0d8;
  color: #3c763d;
  font: 600 13px/18px Inter, sans-serif;
}
.lesson .panel p {
  margin: 0;
  padding: 11px 0 21px 12px;
}
.panel a {
  color: #337ab7;
}
.panel.danger,
.panel.danger h4 {
  border-color: #ebccd1;
}
.panel.danger h4 {
  background: #f2dede;
  color: #a94442;
}
.get-help {
  position: absolute;
  left: 0;
  top: 112px;
  width: 26px;
  height: 76px;
  border-radius: 4px 0 0 4px;
  background: #e01400;
  box-shadow: 0 0 5px rgba(0, 0, 0, 0.3);
  color: #fff;
  font-weight: 700;
  writing-mode: vertical-rl;
  rotate: 180deg;
}
.chat {
  position: absolute;
  right: 40px;
  bottom: 40px;
  width: 40px;
  height: 40px;
  border-radius: 50%;
  background: #007bff;
}
.scrollbar {
  display: flex;
  flex-direction: column;
  align-items: center;
  width: 17px;
  padding: 6px 2px;
  background: #f1f1f1;
}
.track {
  display: flex;
  flex: 1;
  flex-direction: column;
  justify-content: flex-end;
  align-self: stretch;
  padding: 6px 0 138px;
}
.thumb {
  height: 347px;
  background: #c1c1c1;
}

/* taskbar */
.taskbar {
  display: grid;
  grid-template-columns: 1fr auto 1fr;
  align-items: center;
  height: 48px;
  border-top: 1px solid #b6b1b9;
  background: linear-gradient(
    to right,
    #d9dbda 0%,
    #dadada 14%,
    #dcd9e5 22%,
    #e3d6e5 28%,
    #f0dadd 33%,
    #eedbdf 43%,
    #f6e3ed 51%,
    #f1e3f5 60%,
    #e9e2f4 70%,
    #dfe0ea 76%,
    #dadadd 86%,
    #e3e8f4 100%
  );
}
.weather {
  display: flex;
  align-items: center;
  gap: 4px;
  padding: 0 0 2px 18px;
}
.weather-text,
.clock {
  display: flex;
  flex-direction: column;
  line-height: 16px;
}
.muted {
  color: #5b5b5b;
}
.alert-count {
  fill: #fff;
  font-size: 10px;
  text-anchor: middle;
}
.dock {
  display: flex;
  align-items: center;
  padding-left: 1px;
}
.app {
  position: relative;
  width: 40px;
  height: 40px;
  margin: 0 2px;
  border-radius: 4px;
}
.app.alert {
  background: #fce4e6;
}
.app.open::after {
  content: "";
  position: absolute;
  left: 17px;
  bottom: 1px;
  width: 6px;
  height: 3px;
  border-radius: 2px;
  background: #858187;
}
.app.alert::after {
  background: #c42b1c;
}
.app.current::after {
  left: 12px;
  width: 16px;
}
.badge {
  position: absolute;
  right: 3px;
  top: 3px;
  width: 14px;
  border-radius: 7px;
  background: #e85050;
  color: #fff;
  font-size: 10px;
  line-height: 14px;
}
.search {
  display: flex;
  align-items: center;
  gap: 9px;
  width: 219px;
  height: 32px;
  margin: 0 3px;
  padding: 0 4px 0 11px;
  border: 1px solid #dccdd0;
  border-radius: 16px;
  background: #faf5f5;
}
.search input {
  flex: 1;
  font-size: 13px;
}
.search input::placeholder {
  color: #5f5d5d;
  opacity: 1;
}
.tray {
  display: flex;
  align-items: center;
  justify-content: flex-end;
  gap: 8px;
  padding: 0 19px 2px 0;
}
.onedrive {
  margin: 0 7px 0 9px;
}
.clock {
  margin-left: 8px;
  text-align: right;
}
.copilot {
  margin-left: 9px;
}
.pre {
  fill: #1f1f1f;
  font-size: 7px;
  font-weight: 700;
  text-anchor: middle;
}
</style>
